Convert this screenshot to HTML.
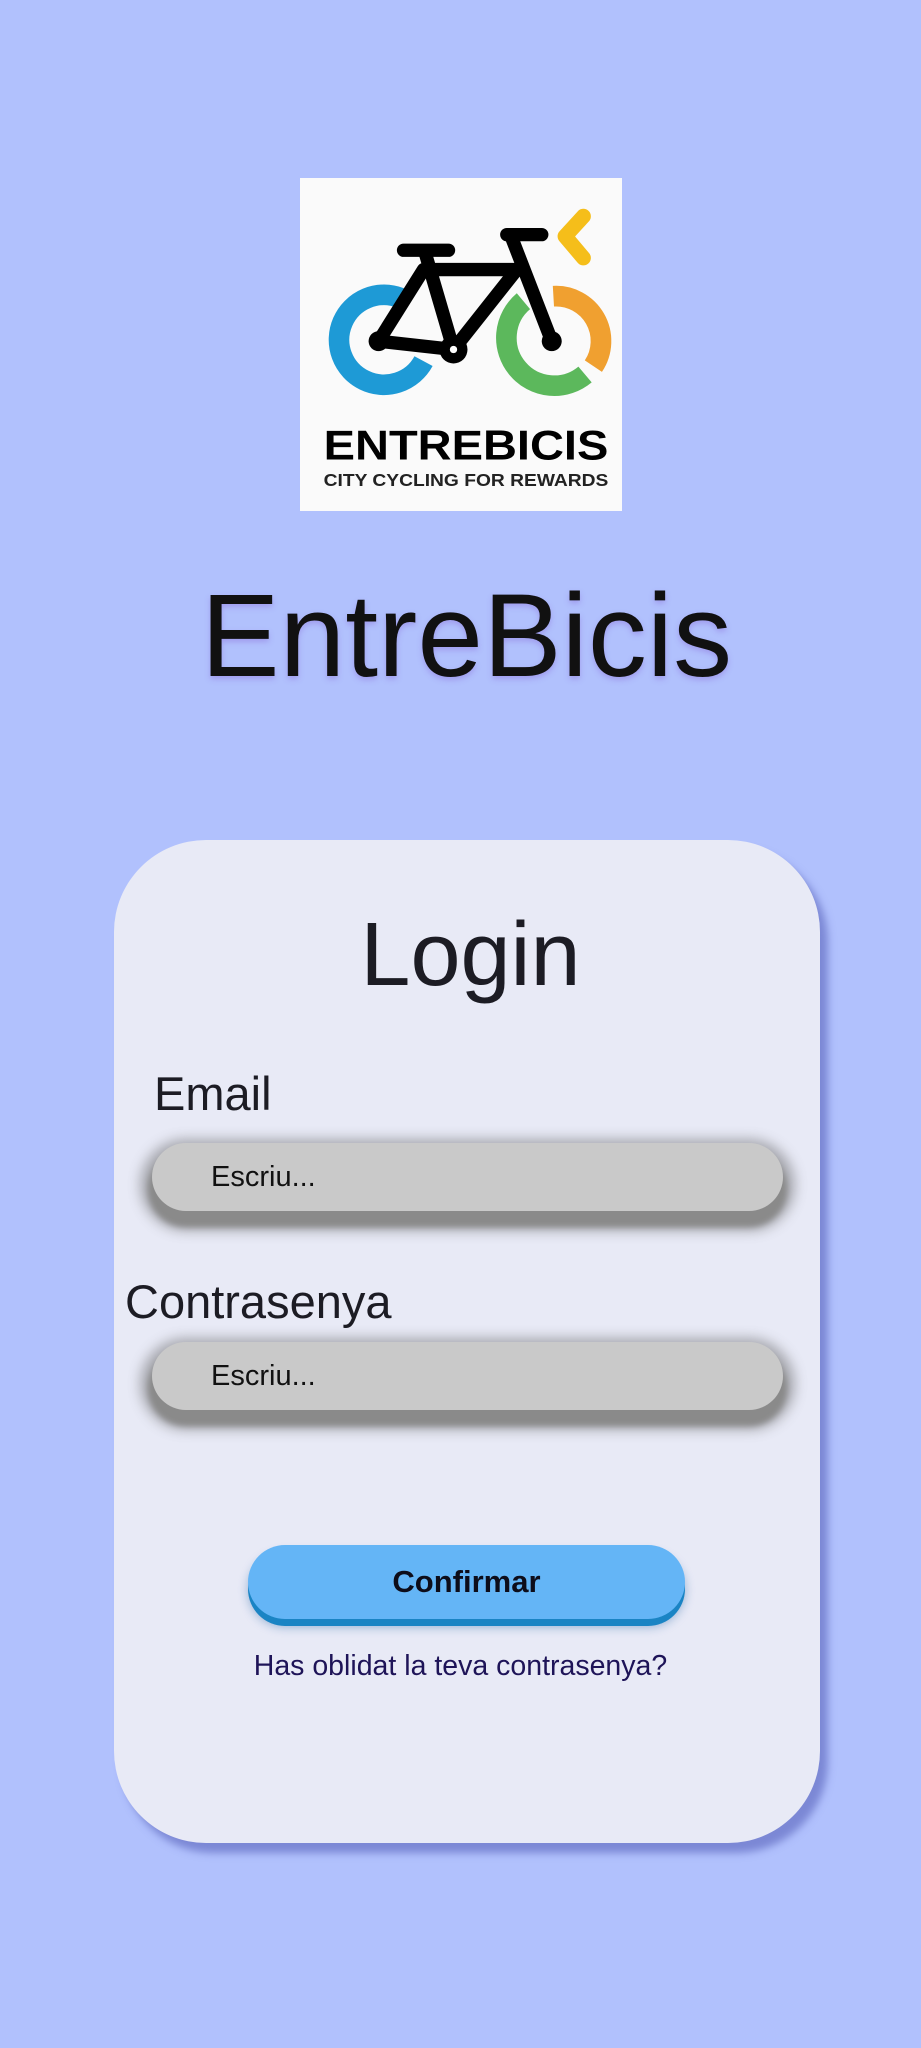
<!DOCTYPE html>
<html><head><meta charset="utf-8"><style>
*{margin:0;padding:0;box-sizing:border-box}
body{width:921px;height:2048px;background:#b1c1fd;position:relative;overflow:hidden;font-family:"Liberation Sans",sans-serif;color:#1c1c24}
.abs{position:absolute}
#logo{left:300px;top:178px;width:322px;height:333px;background:#fafafa}
#title{left:6px;width:921px;text-align:center;top:566px;font-size:118px;line-height:140px;color:#111;text-shadow:0 3px 6px rgba(140,110,220,.45)}
#card{left:114px;top:840px;width:706px;height:1003px;background:#e8eaf6;border-radius:92px;box-shadow:8px 10px 8px rgba(80,90,180,.55)}
#login{left:10px;width:921px;text-align:center;top:900px;font-size:90px;line-height:110px}
.lbl{font-size:47px;line-height:56px}
.inp{left:152px;width:631px;height:68px;border-radius:34px;background:#c9c9c9;box-shadow:0 12px 6px 4px #8a8a8a,0 8px 12px 12px rgba(90,90,90,.45);font-size:29px;line-height:68px;padding-left:59px;color:#111}
#btn{left:248px;width:437px;height:74px;border-radius:37px;background:#64b5f6;box-shadow:0 7px 0 #1a84c4,0 8px 10px rgba(20,90,160,.4);text-align:center;font-weight:bold;font-size:31px;line-height:74px;color:#0d0d1a}
#link{left:0;width:921px;text-align:center;top:1650px;font-size:28.5px;color:#1e1458}
</style></head><body>
<div id="logo" class="abs">
<svg width="322" height="333" viewBox="30 25 965 1000">
<g fill="none" stroke-width="62">
<path d="M330 385 A135 135 0 1 0 400 575" stroke="#1e9ad6"/>
<path d="M700 395 A135 135 0 1 0 885 615" stroke="#5cb85c"/>
<path d="M790 380 A135 135 0 0 1 910 590" stroke="#f0a030"/>
</g>
<path d="M880 140 L825 200 L880 265" fill="none" stroke="#f5be1a" stroke-width="45" stroke-linecap="round" stroke-linejoin="round"/>
<g fill="none" stroke="#000" stroke-width="40" stroke-linecap="round" stroke-linejoin="round">
<path d="M340 242 H475"/><path d="M650 195 H755"/>
<path d="M405 250 L490 540 L680 300 L415 300"/>
<path d="M265 515 L400 300"/><path d="M265 515 L490 540"/>
<path d="M665 205 L785 515"/>
</g>
<circle cx="265" cy="515" r="30"/><circle cx="785" cy="515" r="30"/>
<circle cx="490" cy="540" r="42"/><circle cx="490" cy="540" r="11" fill="#fff"/>
<text x="100" y="870" font-family="Liberation Sans" font-weight="bold" font-size="125" textLength="855" lengthAdjust="spacingAndGlyphs">ENTREBICIS</text>
<text x="100" y="950" font-family="Liberation Sans" font-weight="bold" font-size="54" textLength="855" lengthAdjust="spacingAndGlyphs" fill="#222">CITY CYCLING FOR REWARDS</text>
</svg>
</div>
<div id="title" class="abs">EntreBicis</div>
<div id="card" class="abs"></div>
<div id="login" class="abs">Login</div>
<div class="abs lbl" style="left:154px;top:1066px">Email</div>
<div class="abs inp" style="top:1143px">Escriu...</div>
<div class="abs lbl" style="left:125px;top:1274px">Contrasenya</div>
<div class="abs inp" style="top:1342px">Escriu...</div>
<div id="btn" class="abs" style="top:1545px">Confirmar</div>
<div id="link" class="abs">Has oblidat la teva contrasenya?</div>
</body></html>
